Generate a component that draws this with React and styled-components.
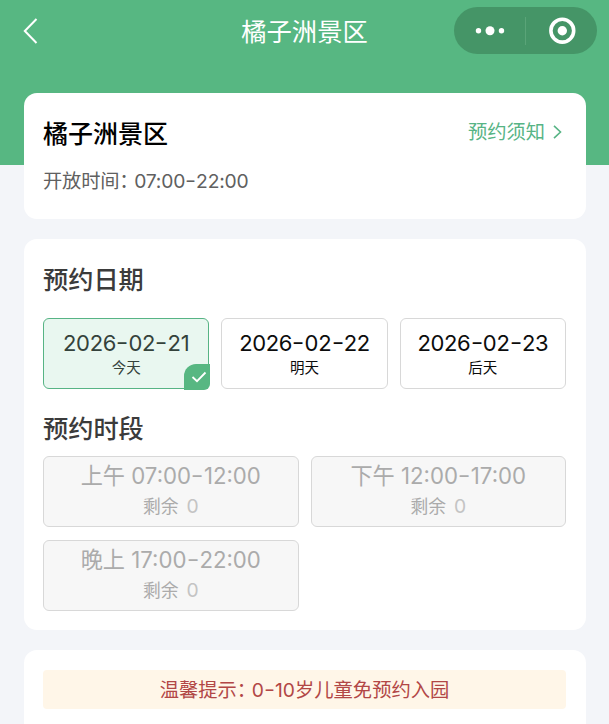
import React, { Fragment } from 'react';
import styled, { createGlobalStyle } from 'styled-components';

const Global = createGlobalStyle`
* {
  box-sizing: border-box;
}
body {
  margin: 0;
  height: 724px;
  overflow: hidden;
  background: #f3f5f9;
  font-family: Inter, 'Noto Sans CJK SC', sans-serif;
}
`;

const Page = styled.div`
  height: 724px;
  overflow: hidden;
`;

const Banner = styled.header`
  height: 164.5px;
  background: #57b782;
`;

const NavBar = styled.div`
  display: grid;
  grid-template-columns: 155px 1fr 155px;
  align-items: center;
  height: 61px;
`;

const BackButton = styled.button`
  display: flex;
  width: 40px;
  padding: 0 0 0 22px;
  border: 0;
  background: none;
`;

const NavTitle = styled.h1`
  margin: 2px 0 0;
  text-align: center;
  font-size: 25.3px;
  font-weight: 400;
  line-height: 38px;
  color: #ffffff;
`;

const Capsule = styled.div`
  display: flex;
  align-items: center;
  width: 143px;
  height: 47px;
  border-radius: 24px;
  background: #459567;
`;

const CapsuleHalf = styled.div`
  display: flex;
  flex: 1;
  align-items: center;
  justify-content: center;
  height: 28px;

  & + & {
    border-left: 1px solid #5aa478;
  }
`;

const Content = styled.main`
  display: flex;
  flex-direction: column;
  gap: 20px;
  margin-top: -71.5px;
  padding: 0 23.5px;
`;

const Card = styled.section`
  height: ${(props) => props.$height}px;
  padding: ${(props) => props.$top}px 19.5px 0;
  border-radius: 13px;
  background: #ffffff;
`;

const SpotRow = styled.div`
  display: flex;
  align-items: center;
  justify-content: space-between;
  height: 38px;
`;

const SpotName = styled.h2`
  margin: 3px 0 0;
  font-size: 25px;
  font-weight: 500;
  line-height: 38px;
  color: #000000;
`;

const NoticeLink = styled.a`
  display: flex;
  align-items: center;
  gap: 8px;
  padding-right: 4px;
  font-size: 19.3px;
  line-height: 28px;
  color: #57b485;
`;

const OpenTime = styled.p`
  margin: 16px 0 0;
  font-size: 19.3px;
  line-height: 28px;
  letter-spacing: -0.01em;
  color: #606060;
`;

// full-width colon narrowed to about three quarters of its cell
const Colon = styled.span`
  letter-spacing: -4.5px;
`;

const DashMark = styled.span`
  display: inline-block;
  margin: 0 0.06em;
  transform: translateY(-0.04em) scaleX(1.25);
`;

const SectionTitle = styled.h3`
  margin: 0;
  font-size: 25.2px;
  font-weight: 500;
  line-height: 38px;
  color: #3b3b3b;
`;

const DateGrid = styled.div`
  display: grid;
  grid-template-columns: repeat(3, 1fr);
  gap: 12px;
  margin: 19px 0 21px;
`;

const Option = styled.div`
  position: relative;
  display: flex;
  flex-direction: column;
  align-items: center;
  height: 71px;
  border: 1px solid #d8d8d8;
  border-radius: 6px;
  white-space: nowrap;
`;

const DateOption = styled(Option)`
  padding-top: 10px;
  border-color: ${(props) => (props.$active ? '#57b485' : '#d8d8d8')};
  background: ${(props) => (props.$active ? '#e9f7f0' : '#ffffff')};
  color: ${(props) => (props.$active ? '#34423b' : '#0c0c0c')};
`;

const DateText = styled.span`
  font-size: 22px;
  line-height: 28px;
  letter-spacing: -0.015em;
`;

const DayText = styled.span`
  font-size: 14.5px;
  line-height: 22px;
`;

const Tick = styled.span`
  position: absolute;
  right: -2px;
  bottom: -2px;
  display: flex;
  align-items: center;
  justify-content: center;
  width: 26px;
  height: 26px;
  padding-left: 3px;
  border-radius: 12px 0 6px 0;
  background: #57b782;
`;

const SlotGrid = styled.div`
  display: grid;
  grid-template-columns: repeat(2, 1fr);
  gap: 12.5px 12px;
  margin-top: 8px;
`;

const SlotOption = styled(Option)`
  padding-top: 3px;
  background: #f7f7f7;
  color: #ababab;
`;

const SlotText = styled.span`
  font-size: 22.2px;
  line-height: 31px;
`;

const RemainText = styled.span`
  display: flex;
  gap: 8px;
  font-size: 17.8px;
  line-height: 31px;
`;

const RemainCount = styled.span`
  font-size: 19.3px;
  color: #c4c4c4;
`;

const Tip = styled.p`
  height: 39px;
  margin: 0;
  padding-top: 1px;
  border-radius: 4px;
  background: #fff6e8;
  text-align: center;
  font-size: 19.3px;
  line-height: 39px;
  color: #b24746;
`;

const dates = [
  { date: '2026-02-21', day: '今天', active: true },
  { date: '2026-02-22', day: '明天' },
  { date: '2026-02-23', day: '后天' },
];

const slots = [
  { label: '上午 07:00-12:00', remain: 0 },
  { label: '下午 12:00-17:00', remain: 0 },
  { label: '晚上 17:00-22:00', remain: 0 },
];

const Dashed = ({ text }) =>
  text.split('-').map((part, i) => (
    <Fragment key={i}>
      {i > 0 && <DashMark>-</DashMark>}
      {part}
    </Fragment>
  ));

const App = () => (
  <Page>
    <Global />
    <Banner>
      <NavBar>
        <BackButton aria-label="返回">
          <svg width="18" height="28" viewBox="0 0 18 28" fill="none">
            <path d="M14.5 2 2.8 14l11.7 12" stroke="#fff" strokeWidth="2" />
          </svg>
        </BackButton>
        <NavTitle>橘子洲景区</NavTitle>
        <Capsule>
          <CapsuleHalf>
            <svg width="30" height="10" viewBox="0 0 30 10" fill="#fff">
              <circle cx="3.5" cy="4.7" r="2.7" />
              <circle cx="15" cy="4.7" r="4.5" />
              <circle cx="26.5" cy="4.7" r="2.7" />
            </svg>
          </CapsuleHalf>
          <CapsuleHalf>
            <svg width="28" height="28" viewBox="0 0 28 28">
              <circle cx="14.3" cy="13.7" r="11.4" fill="none" stroke="#fff" strokeWidth="3.6" />
              <circle cx="14.3" cy="13.7" r="4.7" fill="#fff" />
            </svg>
          </CapsuleHalf>
        </Capsule>
      </NavBar>
    </Banner>

    <Content>
      <Card $height={126} $top={20}>
        <SpotRow>
          <SpotName>橘子洲景区</SpotName>
          <NoticeLink>
            预约须知
            <svg width="9" height="14" viewBox="0 0 9 14" fill="none">
              <path d="M1 .8 7.5 7 1 13.2" stroke="#57b485" strokeWidth="1.6" />
            </svg>
          </NoticeLink>
        </SpotRow>
        <OpenTime>
          开放时间<Colon>：</Colon>
          <Dashed text="07:00-22:00" />
        </OpenTime>
      </Card>

      <Card $height={391} $top={22}>
        <SectionTitle>预约日期</SectionTitle>
        <DateGrid>
          {dates.map((item) => (
            <DateOption key={item.date} $active={item.active}>
              <DateText>
                <Dashed text={item.date} />
              </DateText>
              <DayText>{item.day}</DayText>
              {item.active && (
                <Tick>
                  <svg width="16" height="12" viewBox="0 0 16 12" fill="none">
                    <path d="M1.5 6 6 10.2 14.5 1.5" stroke="#fff" strokeWidth="1.8" />
                  </svg>
                </Tick>
              )}
            </DateOption>
          ))}
        </DateGrid>
        <SectionTitle>预约时段</SectionTitle>
        <SlotGrid>
          {slots.map((slot) => (
            <SlotOption key={slot.label}>
              <SlotText>
                <Dashed text={slot.label} />
              </SlotText>
              <RemainText>
                剩余 <RemainCount>{slot.remain}</RemainCount>
              </RemainText>
            </SlotOption>
          ))}
        </SlotGrid>
      </Card>

      <Card $height={120} $top={20}>
        <Tip>
          温馨提示<Colon>：</Colon>
          <Dashed text="0-10岁儿童免预约入园" />
        </Tip>
      </Card>
    </Content>
  </Page>
);

export default App;
